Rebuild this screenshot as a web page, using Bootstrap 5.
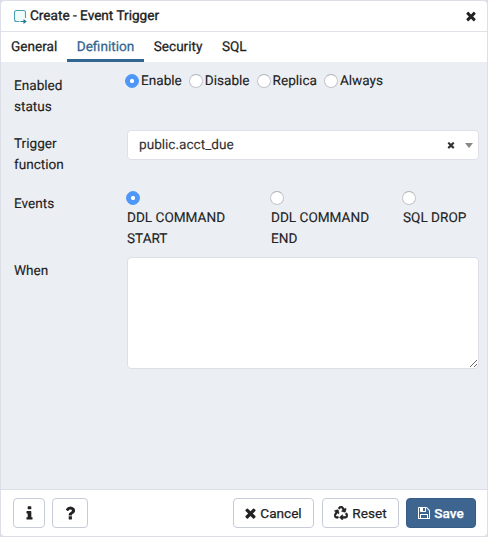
<!DOCTYPE html>
<html lang="en">
<head>
<meta charset="utf-8">
<meta name="viewport" content="width=device-width, initial-scale=1">
<title>Create - Event Trigger</title>
<link href="https://cdn.jsdelivr.net/npm/bootstrap@5.3.0/dist/css/bootstrap.min.css" rel="stylesheet">
<style>
body{font-family:Roboto,"Liberation Sans",sans-serif;font-size:13.6px;line-height:20.5px;color:#222;background:#dcdfe7;height:537px;overflow:hidden;text-rendering:geometricPrecision}
.dlg{width:486px;height:535px;margin:1px;border-radius:4px;overflow:hidden;background:#ebeef3}
.dlg-head{height:31px;padding:0 8px 0 12px;border-bottom:1px solid #dfe2e9;line-height:30px;-webkit-text-stroke:.35px}
.dlg-head svg{-webkit-text-stroke:0;flex:none}
.dlg-title{margin-left:2px}
.fa{fill:currentColor;flex:none}
.tabs{height:30px}
.tabs .nav-link{color:#222;padding:0 10px 0 9.5px;height:30px;line-height:30px;border-radius:0;border-bottom:3px solid transparent;-webkit-text-stroke:.25px}
.tabs .nav-link:first-child{padding-left:10px}
.tabs .nav-link.active{color:#326690;border-color:#326690;background:none}
.dlg-body{height:427px;padding:0 8px 0 13px;-webkit-text-stroke:.12px}
.lbl{width:113px;flex:none}
.lbl span{display:block;width:70px}
.form-check-input.rd{width:14px;height:14px;margin:0;float:none;flex:none;border:1px solid #c3c5ca;border-top-color:#b0b2b6;background:#fff;box-shadow:none}
.form-check-input.rd:checked{border-color:#4e97f8;background:radial-gradient(circle,#fff 0 1.7px,#4e97f8 2.5px)}
.r1{padding-top:14px;height:68px}
.r2{height:60px}
.r3{height:67px}
.radios{height:20px;margin-top:-5px;margin-left:-2px}
.opt{display:flex;align-items:center;gap:2px;margin-right:7px}
.ev{display:flex;flex-direction:column;width:144px}
.ev.e2{width:132px}
.ev .rd{margin:1px 0 3px -1px}
.ev span{width:110px}
.ev.e3{width:70px}
.sel{height:30px;border:1px solid #dde0e6;border-radius:4px;background:#fff;padding:0 5px 0 11px;color:#333}
.caret{width:0;height:0;border:4px solid transparent;border-top:5px solid #888;border-bottom:0;margin-left:9px}
.form-control.when{height:112px;border:1px solid #dde0e6;border-radius:4px;padding:6px 12px;font-size:14px;resize:vertical}
.dlg-foot{height:47px;border-top:1px solid #dcdfe7;padding:8px 11px 0 12px}
.dlg-foot .btn{--bs-btn-font-size:13.6px;--bs-btn-padding-x:0;--bs-btn-padding-y:0;--bs-btn-border-radius:4px;--bs-btn-border-color:#c7cbd8;--bs-btn-color:#222;--bs-btn-bg:#fff;height:30px;line-height:20px;-webkit-text-stroke:.25px}
.dlg-foot .btn.btn-save{--bs-btn-bg:#3d6590;--bs-btn-color:#fff;--bs-btn-border-color:#365d86;font-weight:500}
.w1{width:32px}.w2{width:36px;margin-left:-1px}.w3{width:81px}.w4{width:77px}.w5{width:70px;margin-left:-1px}
</style>
</head>
<body>
<div class="dlg d-flex flex-column">
  <header class="dlg-head bg-white d-flex align-items-center">
    <svg width="15" height="15" viewBox="0 0 15 15"><path d="M6.500 12.500H3.500Q1.500 12.500 1.500 10.500V3.500Q1.500 1.500 3.500 1.500H10.500Q12.500 1.500 12.500 3.500V9" fill="#f0fbfb" stroke="#4ca0b5" stroke-width="1.1"/><path d="M7.500 12.500H11" stroke="#1f7894" stroke-width="1.2"/><path d="M10.500 10L13.800 12.500L10.500 15Z" fill="#1f7894"/></svg>
    <span class="dlg-title">Create - Event Trigger</span>
    <svg class="fa ms-auto" width="16" height="14" viewBox="0 0 1792 1792"><path id="x" d="M1490 1322q0 40-28 68l-136 136q-28 28-68 28t-68-28l-294-294-294 294q-28 28-68 28t-68-28l-136-136q-28-28-28-68t28-68l294-294-294-294q-28-28-28-68t28-68l136-136q28-28 68-28t68 28l294 294 294-294q28-28 68-28t68 28l136 136q28 28 28 68t-28 68l-294 294 294 294q28 28 28 68z"/></svg>
  </header>
  <nav class="tabs nav bg-white flex-nowrap">
    <a class="nav-link" href="#">General</a>
    <a class="nav-link active" href="#">Definition</a>
    <a class="nav-link" href="#">Security</a>
    <a class="nav-link" href="#">SQL</a>
  </nav>
  <main class="dlg-body">
    <div class="r1 d-flex">
      <div class="lbl"><span>Enabled status</span></div>
      <div class="radios d-flex align-items-center">
        <label class="opt"><input class="form-check-input rd" type="radio" name="st" checked><span>Enable</span></label>
        <label class="opt"><input class="form-check-input rd" type="radio" name="st"><span>Disable</span></label>
        <label class="opt"><input class="form-check-input rd" type="radio" name="st"><span>Replica</span></label>
        <label class="opt"><input class="form-check-input rd" type="radio" name="st"><span>Always</span></label>
      </div>
    </div>
    <div class="r2 d-flex">
      <div class="lbl pt-1"><span>Trigger function</span></div>
      <div class="sel flex-grow-1 d-flex align-items-center">
        <span class="me-auto">public.acct_due</span>
        <svg class="fa" width="10" height="10" viewBox="0 0 1792 1792"><use href="#x"/></svg>
        <i class="caret"></i>
      </div>
    </div>
    <div class="r3 d-flex">
      <div class="lbl pt-1"><span>Events</span></div>
      <label class="ev e1"><input class="form-check-input rd" type="radio" name="ev" checked><span>DDL COMMAND START</span></label>
      <label class="ev e2"><input class="form-check-input rd" type="radio" name="ev"><span>DDL COMMAND END</span></label>
      <label class="ev e3"><input class="form-check-input rd" type="radio" name="ev"><span>SQL DROP</span></label>
    </div>
    <div class="d-flex">
      <div class="lbl pt-1"><span>When</span></div>
      <textarea class="form-control when" aria-label="When"></textarea>
    </div>
  </main>
  <footer class="dlg-foot bg-white d-flex gap-2">
    <button class="btn w1 d-flex align-items-center justify-content-center" aria-label="Info"><svg class="fa" width="17" height="17" viewBox="0 0 1792 1792"><path d="M1216 1344v128q0 26-19 45t-45 19h-512q-26 0-45-19t-19-45v-128q0-26 19-45t45-19h64v-384h-64q-26 0-45-19t-19-45v-128q0-26 19-45t45-19h384q26 0 45 19t19 45v576h64q26 0 45 19t19 45zm-128-1152v192q0 26-19 45t-45 19h-256q-26 0-45-19t-19-45v-192q0-26 19-45t45-19h256q26 0 45 19t19 45z"/></svg></button>
    <button class="btn w2 d-flex align-items-center justify-content-center" aria-label="Help"><svg class="fa" width="18" height="18" viewBox="0 0 1792 1792"><path d="M1088 1256v240q0 16-12 28t-28 12h-240q-16 0-28-12t-12-28v-240q0-16 12-28t28-12h240q16 0 28 12t12 28zm316-600q0 54-15.5 101t-35 76.5-55 59.5-57.5 43.5-61 35.5q-41 23-68.5 65t-27.500 67q0 17-12 32.500t-28 15.500h-240q-15 0-25.500-18.500t-10.500-37.500v-45q0-83 65-156.500t143-108.500q59-27 84-56t25-76q0-42-46.500-74t-107.500-32q-65 0-108 29-35 25-107 115-13 16-31 16-12 0-25-8l-164-125q-13-10-15.500-25t5.500-28q160-266 464-266 80 0 161 31t146 83 106 127.500 41 158.500z"/></svg></button>
    <button class="btn w3 d-flex align-items-center justify-content-center ms-auto"><svg class="fa me-1" width="11" height="14" viewBox="256 0 1280 1792" preserveAspectRatio="xMidYMid slice"><use href="#x"/></svg><span>Cancel</span></button>
    <button class="btn w4 d-flex align-items-center justify-content-center"><svg class="fa me-1" width="14" height="14" viewBox="0 0 512 512" stroke="currentColor" stroke-width="20"><path d="M184.561 261.903c3.232 13.997-12.123 24.635-24.068 17.168l-40.736-25.455-50.867 81.402C55.606 356.273 70.960 384 96.012 384H148c6.627 0 12 5.373 12 12v40c0 6.627-5.373 12-12 12H96.115c-75.334 0-121.302-83.048-81.408-146.880l50.822-81.388-40.725-25.448c-12.081-7.547-8.966-25.961 4.879-29.158l110.237-25.450c8.611-1.988 17.201 3.381 19.189 11.990l25.452 110.237zm98.561-182.915l41.289 66.076-40.740 25.457c-12.051 7.528-9 25.953 4.879 29.158l110.237 25.450c8.672 1.999 17.215-3.438 19.189-11.990l25.450-110.237c3.197-13.844-11.990-24.719-24.068-17.168l-40.687 25.424-41.263-66.082c-37.521-60.033-125.209-60.171-162.816 0l-17.963 28.766c-3.510 5.620-1.800 13.021 3.820 16.533l33.919 21.195c5.620 3.512 13.024 1.803 16.536-3.817l17.961-28.743c12.712-20.341 41.973-19.676 54.257-.022zM497.288 301.120l-27.515-44.065c-3.511-5.623-10.916-7.334-16.538-3.821l-33.861 21.159c-5.620 3.512-7.330 10.915-3.818 16.536l27.564 44.112c13.257 21.211-2.057 48.960-27.136 48.960H320V336.020c0-14.213-17.242-21.383-27.313-11.313l-80 79.981c-6.249 6.248-6.249 16.379 0 22.627l80 79.989C302.689 517.308 320 510.300 320 495.989V448h95.880c75.274 0 121.335-82.997 81.408-146.880z"/></svg><span>Reset</span></button>
    <button class="btn btn-save w5 d-flex align-items-center justify-content-center"><svg class="fa me-1" width="12" height="12" viewBox="128 128 1536 1536"><path d="M512 1536h768v-384h-768v384zm896 0h128v-896q0-14-10-38.500t-20-34.500l-281-281q-10-10-34-20t-39-10v416q0 40-28 68t-68 28h-576q-40 0-68-28t-28-68v-416h-128v1280h128v-416q0-40 28-68t68-28h832q40 0 68 28t28 68v416zm-384-928v-320q0-13-9.500-22.500t-22.500-9.500h-192q-13 0-22.500 9.500t-9.500 22.500v320q0 13 9.500 22.500t22.500 9.500h192q13 0 22.500-9.500t9.500-22.500zm640 32v928q0 40-28 68t-68 28h-1344q-40 0-68-28t-28-68v-1344q0-40 28-68t68-28h928q40 0 88 20t76 48l280 280q28 28 48 76t20 88z"/></svg><span>Save</span></button>
  </footer>
</div>
<script src="https://cdn.jsdelivr.net/npm/bootstrap@5.3.0/dist/js/bootstrap.bundle.min.js"></script>
</body>
</html>
